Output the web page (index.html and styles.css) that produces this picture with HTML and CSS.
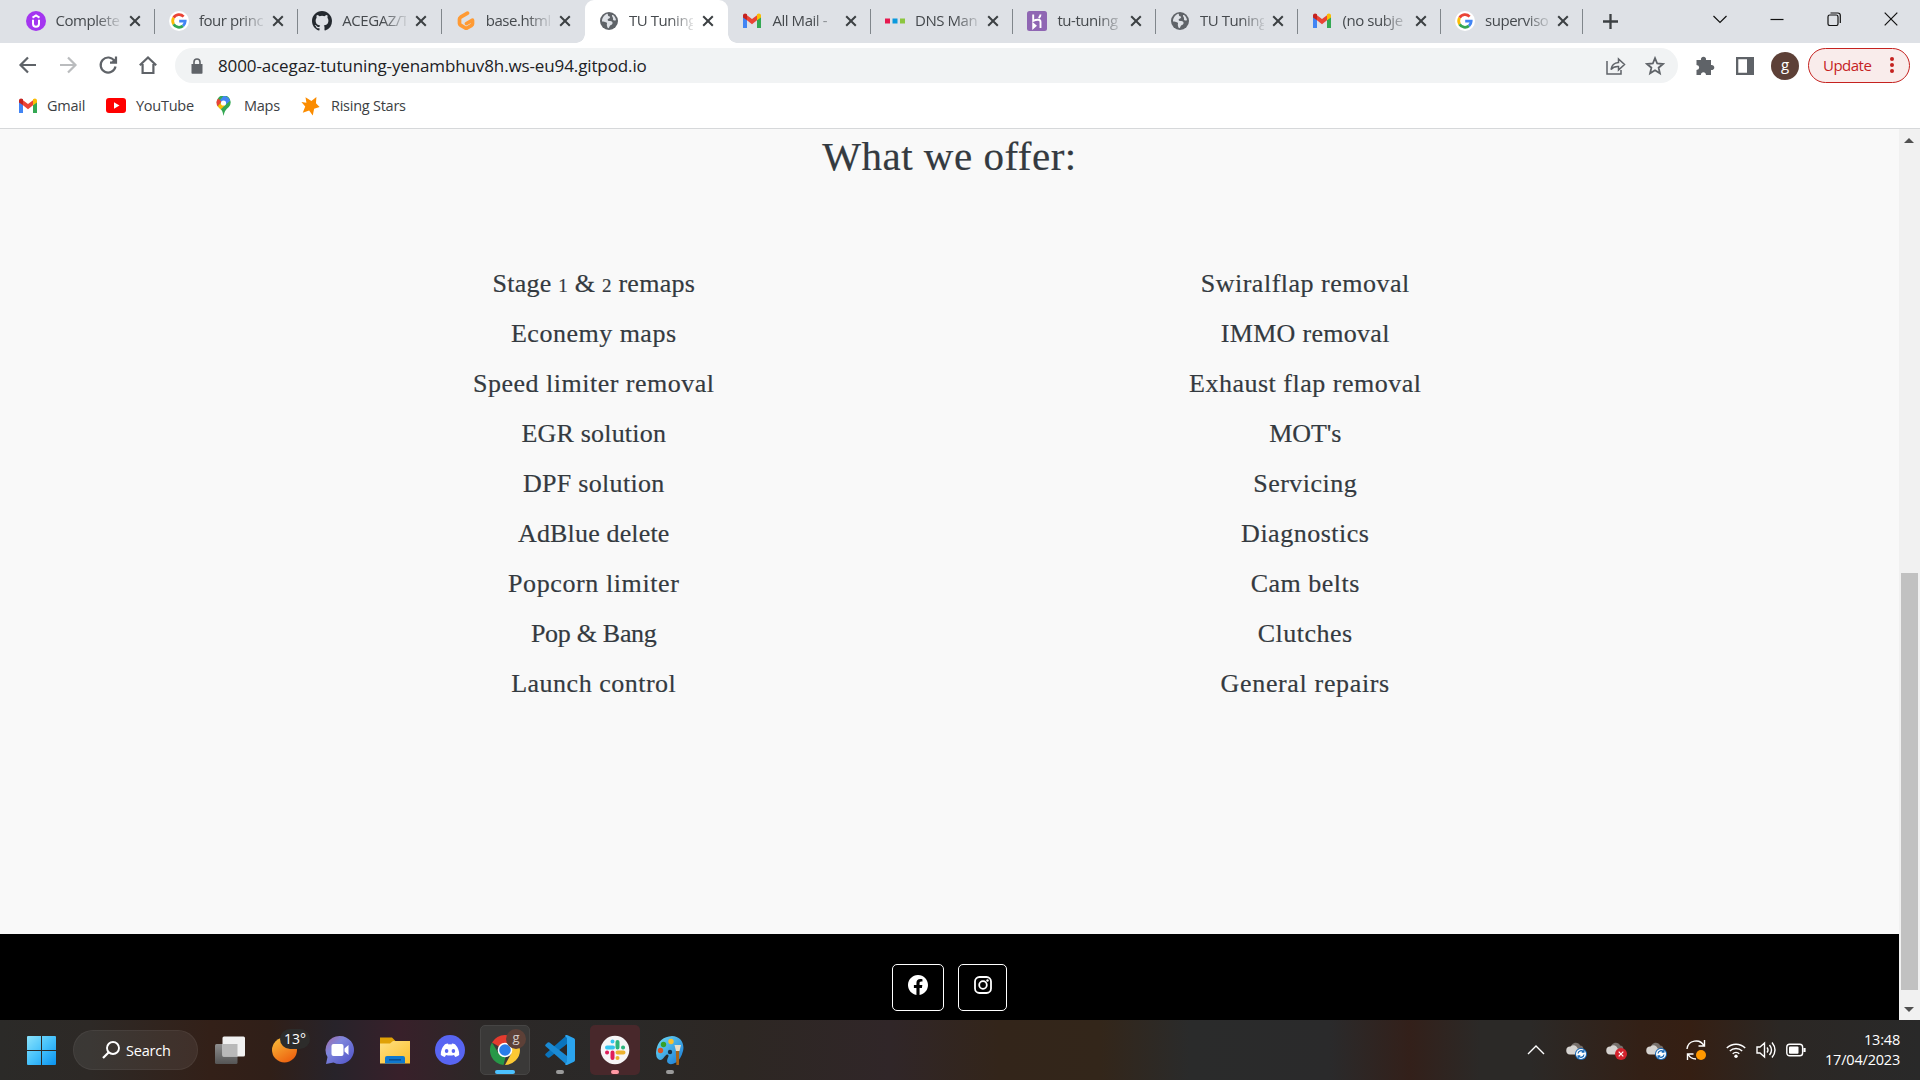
FILE: index.html
```html
<!DOCTYPE html>
<html lang="en">
<head>
<meta charset="utf-8">
<title>TU Tuning</title>
<link rel="stylesheet" href="styles.css">
</head>
<body>
<svg class="defs" aria-hidden="true">
  <defs>
    <linearGradient id="win" x1="0" y1="0" x2="1" y2="1"><stop offset="0" stop-color="#8be3fb"/><stop offset=".5" stop-color="#45c1fb"/><stop offset="1" stop-color="#0a93f0"/></linearGradient>
    <linearGradient id="sun" x1="0" y1="0" x2=".6" y2="1"><stop offset="0" stop-color="#f8c03c"/><stop offset="1" stop-color="#ee6410"/></linearGradient>
    <linearGradient id="chat" x1="0" y1="0" x2="1" y2="1"><stop offset="0" stop-color="#a468a0"/><stop offset=".35" stop-color="#7f86dc"/><stop offset="1" stop-color="#4d50c8"/></linearGradient>
    <linearGradient id="folder" x1="0" y1="0" x2="1" y2="1"><stop offset="0" stop-color="#ffe082"/><stop offset="1" stop-color="#fbc02d"/></linearGradient>
    <linearGradient id="grey" x1="0" y1="0" x2="0" y2="1"><stop offset="0" stop-color="#8d8d8d"/><stop offset="1" stop-color="#555"/></linearGradient>
    <linearGradient id="palette" x1="0" y1="0" x2="1" y2="1"><stop offset="0" stop-color="#6fdcf5"/><stop offset="1" stop-color="#1778d4"/></linearGradient>
  </defs>
  <symbol id="x" viewBox="0 0 12 12"><path d="M1.2 1.2 10.8 10.8M10.8 1.2 1.2 10.8" stroke="#3c4043" stroke-width="2" fill="none"/></symbol>
  <symbol id="google" viewBox="0 0 20 20"><circle cx="10" cy="10" r="10" fill="#fff"/><g fill="none" stroke-width="2.8"><path d="M14.6 5.6A6.3 6.3 0 0 0 4.6 6.8" stroke="#ea4335"/><path d="M4.6 6.8A6.3 6.3 0 0 0 4.6 13.2" stroke="#fbbc05"/><path d="M4.6 13.2A6.3 6.3 0 0 0 14 14.9" stroke="#34a853"/><path d="M14 14.9A6.3 6.3 0 0 0 16.2 10.2H10.2" stroke="#4285f4"/></g></symbol>
  <symbol id="gmail" viewBox="0 0 20 16"><path d="M1 2.5V15h4V7z" fill="#4285f4"/><path d="M19 2.5V15h-4V7z" fill="#34a853"/><path d="M5 2.2l5 3.9 5-3.9V7.3L10 11.2 5 7.3z" fill="#ea4335"/><path d="M1 2.5C1 .6 3.2-.1 4.6 1L5 1.3v6L1 4.4z" fill="#c5221f"/><path d="M19 2.5C19 .6 16.800-.1 15.400 1L15 1.300v6l4-2.900z" fill="#fbbc04"/></symbol>
  <symbol id="globe" viewBox="0 0 20 20"><circle cx="10" cy="10" r="9" fill="#5f6368"/><path d="M7.500 2.900C10 2.500 8 5 10 5.300s1 2-.5 2.500-1 2.500 1 2.200 3.500.8 3 2.500-2.500 1-3 3-1.500 2-2 1-1-3-.5-4-2-1.800-5-2C2.900 7 5 4 7.500 2.900zM13.200 4c1.500-.4 3.500 2.600 3.800 5-1 1-3.500.5-3-1s-1.800-3-.8-4z" fill="#dee1e6"/></symbol>
  <symbol id="cloud" viewBox="0 0 20 20"><path d="M7 12.500a5 5 0 0 1-1-8C8 2 13 2 14 5.500c4 0 4.500 5 1 7z" fill="#77706c"/><path d="M4 14.500a4 4 0 0 1 .5-8C7 4 11 5.500 11.500 8.500c3 0 3.500 6 0 6z" fill="#d6d3d0"/></symbol>
  <symbol id="syncbadge" viewBox="0 0 12 12"><circle cx="6" cy="6" r="6" fill="#1769b8"/><circle cx="6" cy="6" r="5" fill="#fff"/><path d="M3 5.500a3.100 3.100 0 0 1 5.500-1.600M9 6.500a3.100 3.100 0 0 1-5.500 1.600M8.900 2v2.200H6.700M3.100 10V7.800h2.200" fill="none" stroke="#1769b8" stroke-width="1.200"/></symbol>
</svg>

<header class="browser">
  <div class="tabstrip">
    <div class="tab"><svg class="fav" viewBox="0 0 20 20"><circle cx="10" cy="10" r="10" fill="#a435f0"/><path d="M6.500 6.600 10 4.500l3.500 2.100M7 8.800v4c0 4 6 4 6 0v-4" fill="none" stroke="#fff" stroke-width="2"/></svg><span class="title">Complete</span><svg class="close"><use href="#x"/></svg></div>
    <div class="tab"><svg class="fav"><use href="#google"/></svg><span class="title">four princ</span><svg class="close"><use href="#x"/></svg></div>
    <div class="tab"><svg class="fav" viewBox="0 0 16 16"><path fill="#24292f" d="M8 0C3.580 0 0 3.580 0 8c0 3.540 2.290 6.530 5.470 7.590.4.070.55-.17.55-.38 0-.19-.01-.82-.01-1.490-2.010.37-2.530-.49-2.690-.94-.09-.23-.48-.94-.82-1.130-.28-.15-.68-.52-.01-.53.63-.01 1.080.58 1.230.82.72 1.210 1.870.87 2.330.66.070-.52.28-.87.51-1.070-1.780-.2-3.640-.89-3.640-3.950 0-.87.31-1.590.82-2.150-.08-.2-.36-1.020.08-2.120 0 0 .67-.21 2.200.82a7.500 7.500 0 0 1 4 0c1.530-1.040 2.200-.82 2.200-.82.44 1.100.16 1.920.08 2.120.51.56.82 1.270.82 2.150 0 3.070-1.870 3.750-3.650 3.950.29.25.54.73.54 1.480 0 1.070-.01 1.930-.01 2.200 0 .21.15.46.55.38A8 8 0 0 0 16 8c0-4.420-3.580-8-8-8z"/></svg><span class="title">ACEGAZ/T</span><svg class="close"><use href="#x"/></svg></div>
    <div class="tab before"><svg class="fav" viewBox="0 0 20 20"><path d="M11.500 2.200 4.600 6.200Q3.500 6.900 3.500 8v4.500q0 1 1 1.600L9.300 17q.9.400 1.800 0l4.600-2.700q.8-.5.8-1.500V9.200L10.500 12.500" fill="none" stroke="#ff9a33" stroke-width="3.700" stroke-linecap="round" stroke-linejoin="round"/></svg><span class="title">base.html</span><svg class="close"><use href="#x"/></svg></div>
    <div class="tab active"><svg class="fav"><use href="#globe"/></svg><span class="title">TU Tuning</span><svg class="close"><use href="#x"/></svg></div>
    <div class="tab after"><svg class="fav gm"><use href="#gmail"/></svg><span class="title">All Mail -</span><svg class="close"><use href="#x"/></svg></div>
    <div class="tab after"><svg class="fav" viewBox="0 0 20 20"><path d="M0 7.500h5v5H0z" fill="#e6194f"/><path d="M7.500 7.500h5v5h-5z" fill="#0a99dd"/><path d="M15 7.500h5v5h-5z" fill="#8cc63f"/></svg><span class="title">DNS Man</span><svg class="close"><use href="#x"/></svg></div>
    <div class="tab after"><svg class="fav" viewBox="0 0 20 20"><rect width="20" height="20" rx="2.500" fill="#8f66b3"/><path d="M6.200 3.500V10c3-1.500 7.300-2 7.300 1v6M13.500 3.500q0 2-1.800 3.500M6.200 12.800v4l2.300-2z" fill="none" stroke="#fff" stroke-width="1.900"/></svg><span class="title">tu-tuning</span><svg class="close"><use href="#x"/></svg></div>
    <div class="tab after"><svg class="fav"><use href="#globe"/></svg><span class="title">TU Tuning</span><svg class="close"><use href="#x"/></svg></div>
    <div class="tab after"><svg class="fav gm"><use href="#gmail"/></svg><span class="title">(no subje</span><svg class="close"><use href="#x"/></svg></div>
    <div class="tab after"><svg class="fav"><use href="#google"/></svg><span class="title">superviso</span><svg class="close"><use href="#x"/></svg></div>
    <svg class="newtab" viewBox="0 0 15 15"><path d="M7.500 0v15M0 7.500h15" stroke="#3c4043" stroke-width="2.300"/></svg>
    <div class="window-controls">
      <svg viewBox="0 0 14 14"><path d="M.5 4 7 10.500 13.500 4" /></svg>
      <svg viewBox="0 0 14 14"><path d="M.5 7.500h13"/></svg>
      <svg viewBox="0 0 14 14"><rect x="1" y="3" width="10" height="10.500" rx="1.800"/><path d="M3.500 1h7.300q2.500 0 2.500 2.500v7.500"/></svg>
      <svg viewBox="0 0 14 14"><path d="M.7.700l12.600 12.600M13.300.7.700 13.300"/></svg>
    </div>
  </div>

  <div class="toolbar">
    <div class="nav">
      <svg viewBox="0 0 20 20"><path d="M18 10H3M10 2.500 2.500 10l7.500 7.500"/></svg>
      <svg class="off" viewBox="0 0 20 20"><path d="M2 10h15M10 2.500l7.500 7.500-7.500 7.500"/></svg>
      <svg viewBox="0 0 20 20"><path d="M16.500 6A7.500 7.500 0 1 0 17.500 11.500M18 1.500v6.200h-6"/><path d="M18 2.500v5.200h-5.200z" fill="#5f6368" stroke="none"/></svg>
      <svg viewBox="0 0 20 20"><path d="M1.800 10.200 10 2.500l8.200 7.700M4.600 9v9h10.800V9"/></svg>
    </div>
    <div class="omnibox">
      <svg class="lock" viewBox="0 0 12 16"><path d="M.5 6h11v9q0 .8-.8.800H1.300q-.8 0-.8-.8z" fill="#5f6368"/><path d="M3 6.500V4a3 3 0 0 1 6 0v2.500" fill="none" stroke="#5f6368" stroke-width="1.600"/></svg>
      <span class="url">8000-acegaz-tutuning-yenambhuv8h.ws-eu94.gitpod.io</span>
      <svg class="share" viewBox="0 0 20 20"><path d="M1 5v13h14v-4M5 13.500Q6 7 12.500 6.500V3l6 5.500-6 5.500v-3.500Q7.500 10.200 5 13.500z" fill="none" stroke="#5f6368" stroke-width="1.500"/></svg>
      <svg class="star" viewBox="0 0 20 20"><path d="M10 2.200l2.200 5.300 5.700.5-4.300 3.700 1.300 5.600L10 14.300l-4.900 3 1.300-5.600L2.100 8l5.700-.5z" fill="none" stroke="#5f6368" stroke-width="1.800"/></svg>
    </div>
    <div class="actions">
      <svg class="ext" viewBox="0 0 20 20"><path d="M1.500 4H6a2.600 2.600 0 1 1 5 0h5v5a2.600 2.600 0 1 1 0 5v5h-5q-.3-2.800-2.600-2.800T5.800 19H1.500v-5q2.700-.2 2.700-2.500T1.500 9z" fill="#5f6368"/></svg>
      <svg class="panel" viewBox="0 0 18 18"><path d="M0 0h18v18H0zM2.300 2.300v13.400h8.700V2.300z" fill="#5f6368" fill-rule="evenodd"/></svg>
      <span class="avatar">g</span>
      <span class="update"><span>Update</span><i></i></span>
    </div>
  </div>

  <div class="bookmarks">
    <span class="bm gmail-bm"><svg viewBox="0 0 20 16"><use href="#gmail"/></svg>Gmail</span>
    <span class="bm yt-bm"><svg viewBox="0 0 20 15"><rect width="20" height="15" rx="3" fill="#f00"/><path d="M8 4.300v6.400l5.500-3.200z" fill="#fff"/></svg>YouTube</span>
    <span class="bm maps-bm"><svg viewBox="0 0 14 20"><path d="M7 20Q6 13.500 2 11A7 7 0 1 1 12.400 11Q8 14 7 20z" fill="#34a853"/><path d="M7 0a7 7 0 0 1 6.600 4.700L7 10.500 2.800 5z" fill="#4285f4"/><path d="M1.600 2.500 5 5.500 1.200 10.500A7 7 0 0 1 1.600 2.500z" fill="#ea4335"/><path d="M1.200 10.200 5 5.900 9 9 4 13.500z" fill="#fbbc04"/><circle cx="7" cy="7" r="2.600" fill="#fff"/></svg>Maps</span>
    <span class="bm star-bm"><svg viewBox="0 0 20 22"><path d="M4.500 1.500 11 5.500l5.500-4.500-.5 7 4 4-6 2-1.500 7.500-4-5.500-7 2.500 2.700-7L0 6.500l5.500.8z" fill="#fb8c00"/></svg>Rising Stars</span>
  </div>
</header>

<div class="viewport">
  <main class="page">
    <section class="offer">
      <h2>What we offer:</h2>
      <div class="cols">
        <ul class="left">
          <li>Stage <small>1</small> &amp; <small>2</small> remaps</li>
          <li>Econemy maps</li>
          <li>Speed limiter removal</li>
          <li>EGR solution</li>
          <li>DPF solution</li>
          <li>AdBlue delete</li>
          <li>Popcorn limiter</li>
          <li>Pop &amp; Bang</li>
          <li>Launch control</li>
        </ul>
        <ul class="right">
          <li>Swiralflap removal</li>
          <li>IMMO removal</li>
          <li>Exhaust flap removal</li>
          <li>MOT's</li>
          <li>Servicing</li>
          <li>Diagnostics</li>
          <li>Cam belts</li>
          <li>Clutches</li>
          <li>General repairs</li>
        </ul>
      </div>
    </section>
    <footer class="footer">
      <a class="social fb"><svg viewBox="0 0 16 16"><path fill="#fff" d="M16 8.049c0-4.446-3.582-8.050-8-8.050C3.580 0-.002 3.603-.002 8.050c0 4.017 2.926 7.347 6.750 7.951v-5.625h-2.030V8.050H6.750V6.275c0-2.017 1.195-3.131 3.022-3.131.876 0 1.791.157 1.791.157v1.980h-1.009c-.993 0-1.303.621-1.303 1.258v1.510h2.218l-.354 2.326H9.250V16c3.824-.604 6.750-3.934 6.750-7.951z"/></svg></a>
      <a class="social ig"><svg viewBox="0 0 18 18"><g fill="none" stroke="#fff" stroke-width="1.800"><rect x="1" y="1" width="16" height="16" rx="4.500"/><circle cx="9" cy="9" r="3.800"/></g><circle cx="13.500" cy="4.500" r="1.200" fill="#fff"/></svg></a>
    </footer>
  </main>
  <div class="scrollbar"><i class="up"></i><i class="thumb"></i><i class="down"></i></div>
</div>

<div class="taskbar">
  <svg class="start" viewBox="0 0 29 29"><path d="M1 0h13v14H0V1q0-1 1-1zM15 0h13q1 0 1 1v13H15zM0 15h14v14H1q-1 0-1-1zM15 15h14v13q0 1-1 1H15z" fill="url(#win)"/></svg>
  <div class="search"><svg viewBox="0 0 18 18"><circle cx="11" cy="7" r="6" fill="none" stroke="#fff" stroke-width="1.900"/><path d="M6.800 11.200 1 17" stroke="#fff" stroke-width="2.200"/></svg>Search</div>
  <div class="apps">
    <div class="app"><svg viewBox="0 0 30 30"><rect y="9" width="22.500" height="20" rx="1.500" fill="url(#grey)"/><rect x="7.500" y="1.500" width="22.500" height="20" rx="1.500" fill="#f1f1f1"/><path d="M7.500 9h15v12.500h-15z" fill="#b9b9b9"/></svg></div>
    <div class="app"><svg viewBox="0 0 30 30"><circle cx="14.500" cy="15" r="12.500" fill="url(#sun)"/></svg><b class="temp">13°</b></div>
    <div class="app"><svg viewBox="0 0 30 30"><path d="M15 1a14 14 0 1 1-6.500 26.400L1 29l1.500-7A14 14 0 0 1 15 1z" fill="url(#chat)"/><rect x="6.500" y="9" width="12" height="12" rx="2" fill="#fff"/><path d="M19.500 13.500 23.500 10v10l-4-3.500z" fill="#fff"/></svg></div>
    <div class="app"><svg viewBox="0 0 30 30"><path d="M0 2.500h12l3.500 3.500H30v8H0z" fill="#e0a106"/><path d="M0 8.500h10l3-2.500h17v22.500H0z" fill="url(#folder)"/><path d="M5 28.500v-5.500q0-2 2-2h16q2 0 2 2v5.500z" fill="#0f79cf"/><path d="M9 24.800h12" stroke="#0a4f91" stroke-width="1.500"/></svg></div>
    <div class="app"><svg viewBox="0 0 30 30"><circle cx="15" cy="15" r="15" fill="#5865f2"/><path d="M10 9.300q1.500-.8 3-.9l.5 1q1.500-.3 3 0l.5-1q1.500.1 3 .9Q24.500 14 24.200 20q-2 1.600-4 2l-1.200-1.900q-4 1-8 0L9.800 22q-2-.4-4-2Q5.500 14 10 9.300z" fill="#fff"/><ellipse cx="11.600" cy="15.900" rx="1.800" ry="2" fill="#5865f2"/><ellipse cx="18.400" cy="15.900" rx="1.800" ry="2" fill="#5865f2"/></svg></div>
    <div class="app run current"><svg viewBox="0 0 30 30"><path d="M15 15 2.010 7.500A15 15 0 0 1 27.990 7.500z" fill="#e33b2e"/><path d="M2.010 7.500 8.800 18.800 15 22l.5 0L13.500 30A15 15 0 0 1 2.010 7.500z" fill="#279847"/><path d="M15 8H28a15 15 0 0 1 2 7 15 15 0 0 1-15 15l6.300-11.500z" fill="#fcc934"/><circle cx="15" cy="15" r="7.300" fill="#fff"/><circle cx="15" cy="15" r="5.800" fill="#2a7de9"/></svg><b class="who">g</b></div>
    <div class="app run"><svg viewBox="0 0 30 30"><path d="M22 0v9L4.500 22.500Q3.500 23 2.700 22.400L.6 20.500q-.8-.9 0-1.800z" fill="#0a74bd"/><path d="M22 30v-9L4.500 7.500Q3.500 7 2.700 7.600L.6 9.500q-.8.900 0 1.800z" fill="#1a8ad4"/><path d="M22 0l7 3.300q1 .5 1 1.700v20q0 1.200-1 1.700L22 30q-1.500.2-2-1l2-2V3l-2-2q.5-1.200 2-1z" fill="#2ba4ee"/></svg></div>
    <div class="app run alert"><svg viewBox="0 0 30 30"><circle cx="15" cy="15" r="14.300" fill="#f6f5f6"/><g stroke-width="4" stroke-linecap="round"><path d="M7 12.500h6M12.500 6.500v.1" stroke="#36c5f0"/><path d="M17.500 7v5.500M23 12.500h.1" stroke="#2eb67d"/><path d="M17.500 17.500h6M17.500 23v.1" stroke="#ecb22e"/><path d="M12.500 17.500v5.500M7 17.500h.1" stroke="#e01e5a"/></g></svg></div>
    <div class="app run"><svg viewBox="0 0 30 30"><path d="M17 1C25 1 30 8 28 16q-2 8-7 11.500-6 3.500-8.500 0-1-2 .5-5t-1-3q-1 0-3.500 3.500T3 24Q0 21 1.500 14 4 2 17 1z" fill="url(#palette)"/><circle cx="16" cy="6.500" r="2.700" fill="#fbc02d"/><circle cx="8.500" cy="9.500" r="2.700" fill="#35a12a"/><circle cx="5.500" cy="15.500" r="2.700" fill="#dd5424"/><circle cx="15" cy="17" r="2.200" fill="#163247"/><path d="M20.800 16h3.400l-.3 14h-2.500z" fill="#a96416"/><path d="M19.500 10h6.500l-1.500 6h-3.500z" fill="#e9dcc6"/></svg></div>
  </div>
  <div class="tray">
    <svg class="chev" viewBox="0 0 20 20"><path d="M2 14l8-8 8 8"/></svg>
    <span class="t"><svg><use href="#cloud"/></svg><svg class="bdg"><use href="#syncbadge"/></svg></span>
    <span class="t"><svg><use href="#cloud"/></svg><svg class="bdg" viewBox="0 0 12 12"><circle cx="6" cy="6" r="6" fill="#d3222c"/><path d="M3.700 3.700l4.600 4.600M8.300 3.700 3.700 8.300" stroke="#fff" stroke-width="1.200"/></svg></span>
    <span class="t"><svg><use href="#cloud"/></svg><svg class="bdg"><use href="#syncbadge"/></svg></span>
    <svg class="upd" viewBox="0 0 20 20"><path d="M1 9a9 9 0 0 1 17-3M18.500 0v6h-6M10 19a9 9 0 0 1-8-5M1.500 20v-6h6"/><circle cx="15" cy="15" r="5" fill="#ff9800" stroke="none"/></svg>
    <svg class="wifi" viewBox="0 0 20 20"><path d="M.8 8a13 13 0 0 1 18.400 0M3.800 11a8.800 8.800 0 0 1 12.400 0M6.700 13.800a4.700 4.700 0 0 1 6.600 0"/><circle cx="10" cy="16.300" r="1.700" fill="#fff" stroke="none"/></svg>
    <svg class="vol" viewBox="0 0 20 20"><path d="M1 7h3l4.500-4v14L4 13H1zM11 7.500q2 2.500 0 5M13.500 5q4 5 0 10M16 2.500q6 7.500 0 15"/></svg>
    <svg class="bat" viewBox="0 0 20 20"><rect x=".8" y="4.300" width="15.800" height="11.500" rx="2.800"/><rect x="3" y="6.500" width="9.500" height="7.200" rx="1" fill="#fff" stroke="none"/><path d="M18.500 8v4" stroke-width="2.200"/></svg>
    <div class="clock"><span>13:48</span><span>17/04/2023</span></div>
  </div>
</div>
</body>
</html>
```
FILE: styles.css
```css
* { box-sizing: border-box; }
body {
  margin: 0;
  width: 1920px;
  height: 1080px;
  overflow: hidden;
  display: flex;
  flex-direction: column;
  background: #fff;
  font-family: "Open Sans", "Noto Sans", sans-serif;
}
svg { display: block; flex: none; }
.defs { position: absolute; width: 0; height: 0; }

/* Browser chrome */
.browser { height: 129px; border-bottom: 1px solid #d6d8da; flex: none; }
.tabstrip { height: 43px; background: #dee1e6; display: flex; align-items: center; padding-left: 11.500px; }
.tab {
  width: 143.400px;
  height: 43px;
  display: flex;
  align-items: center;
  padding: 0 0 1px 14px;
  font-size: 15px;
  letter-spacing: -0.450px;
  color: #45494d;
  background: linear-gradient(#80868b, #80868b) right 9px / 1px 25px no-repeat;
  flex: none;
}
.after { width: 142.500px; }
.fav { width: 20px; height: 20px; }
.gm { height: 16px; }
.title {
  width: 64px;
  margin: -2px 9px 0 10px;
  white-space: nowrap;
  -webkit-mask-image: linear-gradient(90deg, #000 40px, transparent 68px);
  mask-image: linear-gradient(90deg, #000 40px, transparent 68px);
}
.after .title { margin-right: 8.300px; }
.close { width: 12px; height: 12px; }
.before { background: none; }
.active {
  position: relative;
  background: #fff;
  border-radius: 9px 9px 0 0;
}
.active::before, .active::after {
  content: "";
  position: absolute;
  bottom: 0;
  width: 9px;
  height: 9px;
}
.active::before { left: -9px; background: radial-gradient(circle at 0 0, transparent 8.500px, #fff 9px); }
.active::after { right: -9px; background: radial-gradient(circle at 100% 0, transparent 8.500px, #fff 9px); }
.newtab { width: 15px; height: 15px; margin-left: 20px; }
.window-controls { margin: -6px 22px 0 auto; display: flex; gap: 43px; }
.window-controls svg { width: 14px; height: 14px; fill: none; stroke: #111; stroke-width: 1.200; }

.toolbar { height: 45px; display: flex; align-items: center; padding: 0 10px 0 18px; }
.nav { display: flex; gap: 20px; width: 157px; margin-top: -1px; }
.nav svg { width: 20px; height: 20px; fill: none; stroke: #5f6368; stroke-width: 2.200; }
.nav .off { stroke: #babcbe; }
.omnibox {
  width: 1503px;
  height: 35px;
  border-radius: 18px;
  background: #f1f3f4;
  display: flex;
  align-items: center;
  padding: 0 13px 0 16px;
}
.lock { width: 12px; height: 16px; margin-right: 15px; }
.url { font-size: 17px; letter-spacing: -0.120px; color: #202124; }
.share { width: 20px; height: 20px; margin-left: auto; margin-right: 19px; }
.star { width: 20px; height: 20px; }
.actions { display: flex; align-items: center; margin-left: 17px; }
.ext { width: 20px; height: 20px; margin-right: 21px; }
.panel { width: 18px; height: 18px; margin-right: 17px; }
.avatar {
  width: 28px; height: 28px; border-radius: 50%;
  background: #5d4037; color: #fff;
  display: flex; align-items: center; justify-content: center;
  font-size: 15px; line-height: 1; padding-bottom: 3px;
  margin-right: 9px;
}
.update {
  width: 102px; height: 35px; border-radius: 18px;
  border: 1.500px solid #c5221f; background: #f9eceb; color: #c5221f;
  display: flex; align-items: center; justify-content: space-between;
  padding: 0 15px 2px 14px;
  font-size: 15px; letter-spacing: -0.500px;
}
.update i {
  width: 4px; height: 4px; border-radius: 50%; background: #c5221f;
  box-shadow: 0 -6px #c5221f, 0 6px #c5221f;
}

.bookmarks { display: flex; height: 35px; align-items: center; padding-left: 18px; font-size: 14.500px; letter-spacing: -0.250px; color: #3c4043; }
.bm { display: flex; align-items: center; }
.gmail-bm { width: 88px; }
.gmail-bm svg { width: 20px; height: 16px; margin-right: 9px; }
.yt-bm { width: 110px; }
.yt-bm svg { width: 20px; height: 15px; margin-right: 10px; }
.maps-bm { width: 85px; }
.maps-bm svg { width: 15px; height: 20px; margin-right: 13px; }
.star-bm svg { width: 19px; height: 20px; margin-right: 11px; }

/* Web page */
.viewport { display: flex; flex: 1; min-height: 0; }
.page { width: 1899px; display: flex; flex-direction: column; background: #f9f9f9; }
.offer { flex: 1; font-family: "Liberation Serif", serif; color: #343a40; text-align: center; -webkit-text-stroke: 0.200px #343a40; }
.offer h2 { margin: 2px 0 0; font-size: 41px; line-height: 50px; font-weight: 400; letter-spacing: 0.500px; }
.cols { display: grid; grid-template-columns: 1fr 1fr; width: 1423px; margin: 78px auto 0; }
.cols ul { list-style: none; margin: 0; padding: 0; }
.cols li { height: 50px; line-height: 50px; font-size: 26px; letter-spacing: 0.500px; }
.cols small { font-size: 19px; }
.left li:nth-child(1) { letter-spacing: 0.250px; }
.left li:nth-child(4) { letter-spacing: 0.200px; }
.left li:nth-child(5) { letter-spacing: 0.300px; }
.left li:nth-child(6) { letter-spacing: 0.150px; }
.left li:nth-child(7) { letter-spacing: 0.600px; }
.left li:nth-child(8) { letter-spacing: -0.300px; }
.right li:nth-child(2) { letter-spacing: 0.300px; }
.right li:nth-child(4) { letter-spacing: -0.100px; }
.right li:nth-child(9) { letter-spacing: 0.650px; }
.footer { height: 86px; background: #000; display: flex; justify-content: center; padding-top: 30px; gap: 14px; }
.social { height: 47px; border: 1px solid #fff; border-radius: 5px; display: flex; justify-content: center; padding-top: 10px; }
.fb { width: 52px; }
.fb svg { width: 20px; height: 20px; }
.ig { width: 49px; padding-top: 11px; }
.ig svg { width: 18px; height: 18px; }
.scrollbar { width: 21px; background: #f1f1f1; display: flex; flex-direction: column; align-items: center; padding: 9px 1px 8px 0; }
.scrollbar i { width: 0; border: 5px solid transparent; }
.scrollbar .up { border-top: 0; border-bottom-color: #505050; }
.scrollbar .thumb { width: 17px; height: 417px; border: 0; background: #c1c1c1; margin-top: 430px; }
.scrollbar .down { border-bottom: 0; border-top-color: #505050; margin-top: auto; }

/* Taskbar */
.taskbar {
  height: 60px;
  flex: none;
  display: flex;
  align-items: center;
  padding-left: 27px;
  background: linear-gradient(90deg, #2b2a28 0, #2d2926 90px, #332018 210px, #301f18 270px, #27232a 335px, #38202a 400px, #2c2827 480px, #2a2928 620px, #2d2723 740px, #302628 890px, #33251a 1000px, #33261a 1100px, #2a2b2b 1190px, #2a2a2b 1330px, #33201a 1410px, #2b2927 1480px, #2b2927 1530px, #332016 1640px, #351f13 1690px, #2b2724 1780px, #292929 1920px);
  color: #fff;
}
.start { width: 29px; height: 29px; }
.search {
  width: 125px; height: 40px; margin-left: 17px;
  border-radius: 20px; background: rgba(255,255,255,.07); border: 1px solid rgba(255,255,255,.05);
  display: flex; align-items: center; gap: 6px; padding-left: 28px;
  font-size: 14.500px; letter-spacing: -0.200px;
}
.search svg { width: 18px; height: 18px; }
.apps { display: flex; gap: 5px; margin-left: 7px; }
.app { position: relative; width: 50px; height: 50px; display: flex; align-items: center; justify-content: center; border-radius: 5px; }
.app > svg { width: 30px; height: 30px; }
.app.current { background: #3a3938; border: 1px solid #464544; }
.app.alert { background: #48282b; }
.run::after { content: ""; position: absolute; bottom: 1px; width: 8px; height: 4px; border-radius: 2px; background: #9a9a9a; }
.current::after { width: 20px; background: #4cc2ff; bottom: 0; }
.alert::after { background: #ff99a4; }
.temp {
  position: absolute; left: 20px; top: 4px; width: 30px; height: 20px; border-radius: 10px;
  background: #2d2c2b; font: 400 14px/20px "Open Sans", sans-serif; text-align: center;
}
.who {
  position: absolute; left: 25px; top: 3px; width: 20px; height: 20px; border-radius: 50%;
  background: #5d4037; color: #d6cfcc; font: 400 13px/17px "Open Sans", sans-serif; text-align: center;
}
.tray { margin-left: auto; display: flex; align-items: center; gap: 20px; padding-right: 20px; }
.tray svg { width: 20px; height: 20px; fill: none; stroke: #fff; stroke-width: 1.400; }
.t { position: relative; width: 20px; height: 20px; }
.t svg { stroke: none; }
.tray .bdg { position: absolute; width: 12px; height: 12px; right: -1px; bottom: 0; }
.tray .wifi { margin-right: -10px; }
.tray .vol { margin-right: -10px; }
.clock { width: 74px; display: flex; flex-direction: column; align-items: flex-end; font-size: 14.500px; line-height: 20px; letter-spacing: -0.200px; white-space: nowrap; }
```
